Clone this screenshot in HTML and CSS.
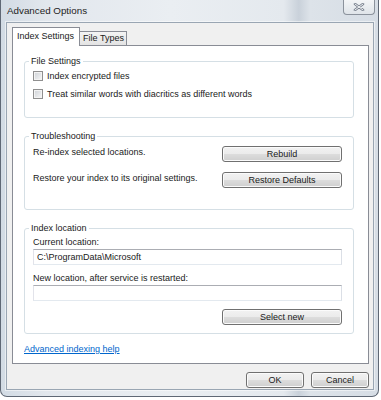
FILE: index.html
```html
<!DOCTYPE html>
<html lang="en">
<head>
  <meta charset="UTF-8" />
  <title>Advanced Options</title>
  <link rel="stylesheet" href="styles.css">
</head>
<body>
  <div class="window">
    <div class="titlebar">
      <span class="title">Advanced Options</span>
      <span class="close">
        <svg width="12" height="8" viewBox="0 0 12 8">
          <path d="M2 1 L10 7 M10 1 L2 7" stroke="#7b8390" stroke-width="2.6" stroke-linecap="round"/>
          <path d="M2 1 L10 7 M10 1 L2 7" stroke="#f4f6f8" stroke-width="1" stroke-linecap="round"/>
        </svg>
      </span>
    </div>

    <div class="client">
      <!-- tab strip -->
      <div class="tabs">
        <span class="tab tab-active">Index Settings</span>
        <span class="tab">File Types</span>
      </div>

      <div class="panel">
        <fieldset class="group group-files">
          <legend>File Settings</legend>
          <label class="check-row"><input type="checkbox">Index encrypted files</label>
          <label class="check-row"><input type="checkbox">Treat similar words with diacritics as different words</label>
        </fieldset>

        <fieldset class="group group-trouble">
          <legend>Troubleshooting</legend>
          <div class="action-row">
            <span class="action-text">Re-index selected locations.</span>
            <button class="btn btn-wide">Rebuild</button>
          </div>
          <div class="action-row">
            <span class="action-text">Restore your index to its original settings.</span>
            <button class="btn btn-wide">Restore Defaults</button>
          </div>
        </fieldset>

        <fieldset class="group group-location">
          <legend>Index location</legend>
          <div class="field-label">Current location:</div>
          <input class="field" type="text" value="C:\ProgramData\Microsoft">
          <div class="field-label">New location, after service is restarted:</div>
          <input class="field" type="text" value="">
          <div class="select-row">
            <button class="btn btn-wide">Select new</button>
          </div>
        </fieldset>

        <div class="help"><a href="#" class="help-link">Advanced indexing help</a></div>
      </div>

      <div class="footer">
        <button class="btn btn-small">OK</button>
        <button class="btn btn-small">Cancel</button>
      </div>
    </div>
  </div>
</body>
</html>
```

FILE: styles.css
```css
body {
  margin: 0;
  background: #ffffff;
  font-family: "Liberation Sans", Arial, sans-serif;
  font-size: 9px;
  color: #1a1a1a;
}

.window {
  box-sizing: border-box;
  width: 379px;
  height: 397px;
  padding: 0 4px 6px 5px;
  border: 1px solid #5f6875;
  border-top: none;
  border-radius: 0 0 7px 7px;
  display: flex;
  flex-direction: column;
  background: linear-gradient(90deg, #d2dbe4 0%, #e2e7ed 12%, #eaeef2 45%, #e4e9ee 75%, #c9d1da 79%, #dde3e9 82%, #d6dde5 100%);
}

.titlebar {
  height: 22px;
  display: flex;
  align-items: flex-start;
}

.title {
  margin: 5px 0 0 1px;
  font-size: 9.8px;
  line-height: 12px;
  color: #1e1e1e;
}

.close {
  box-sizing: border-box;
  margin-left: auto;
  margin-right: -1px;
  width: 32px;
  height: 15px;
  border: 1px solid #8b929c;
  border-top: none;
  border-radius: 0 0 4px 4px;
  background: linear-gradient(#f3f5f7, #dfe4e9);
  display: flex;
  align-items: center;
  justify-content: center;
}

.client {
  flex: 1;
  display: flex;
  flex-direction: column;
  padding: 4px 4px 0 5px;
  background: #f0f0f0;
  border: 1px solid #9aa6b3;
  box-shadow: 0 0 0 1px rgba(255, 255, 255, 0.5);
}

.tabs {
  display: flex;
  align-items: flex-end;
}

.tab {
  line-height: 12px;
  padding: 0 2px 1px 3px;
  border: 1px solid #898c95;
  border-left: none;
  border-bottom: none;
  background: linear-gradient(#f4f4f4, #e3e3e3);
}

.tab-active {
  position: relative;
  z-index: 1;
  padding: 2px 5px 4px 4px;
  margin-bottom: -1px;
  border-left: 1px solid #898c95;
  background: #ffffff;
}

.panel {
  width: 357px;
  box-sizing: border-box;
  padding: 8px 14px 8px 11px;
  background: #ffffff;
  border: 1px solid #898c95;
}

.group {
  margin: 0;
  min-width: 0;
  padding: 0 11px 15px 8px;
  border: 1px solid #d5dfe5;
  border-radius: 3px;
}

.group legend {
  padding: 0 2px;
  margin-left: -4px;
  line-height: 14px;
}

.group-trouble,
.group-location {
  margin-top: 11px;
}

.group-trouble {
  padding-top: 3px;
  padding-bottom: 21px;
}

.group-location {
  padding-top: 1px;
  padding-bottom: 8px;
}

.check-row {
  display: flex;
  align-items: center;
  height: 16px;
}

.check-row + .check-row {
  margin-top: 2px;
}

.check-row input {
  appearance: none;
  box-sizing: border-box;
  width: 10px;
  height: 10px;
  margin: 0 4px 0 0;
  border: 1px solid #8f8f8f;
  background: linear-gradient(135deg, #cdd1d6, #f7f7f7);
  box-shadow: inset 0 0 0 1px #f3f3f3;
}

.action-row {
  display: flex;
  justify-content: space-between;
  align-items: flex-start;
}

.action-row + .action-row {
  margin-top: 10px;
}

.action-text {
  line-height: 12px;
}

.btn {
  box-sizing: border-box;
  height: 16px;
  padding: 0;
  font-family: inherit;
  font-size: 9px;
  line-height: 14px;
  color: #1a1a1a;
  border: 1px solid #707070;
  border-radius: 3px;
  background: linear-gradient(#f2f2f2 0%, #ebebeb 50%, #dddddd 50%, #cfcfcf 100%);
  box-shadow: inset 0 0 0 1px #fbfbfb;
}

.btn-wide {
  width: 120px;
}

.btn-small {
  width: 58px;
}

.field-label {
  line-height: 12px;
}

.field {
  display: block;
  box-sizing: border-box;
  width: 100%;
  height: 16px;
  margin: 1px 0 7px;
  padding: 0 3px;
  font-family: inherit;
  font-size: 9px;
  color: #1a1a1a;
  border: 1px solid;
  border-color: #abadb3 #dbdfe6 #e3e9ef #e2e3ea;
  background: #ffffff;
}

.field + .field-label + .field {
  margin-bottom: 8px;
}

.select-row {
  display: flex;
  justify-content: flex-end;
}

.help {
  margin-top: 9px;
  line-height: 12px;
}

.help-link {
  color: #0066cc;
  text-decoration: underline;
}

.footer {
  display: flex;
  justify-content: flex-end;
  gap: 7px;
  margin-top: 8px;
}
```
